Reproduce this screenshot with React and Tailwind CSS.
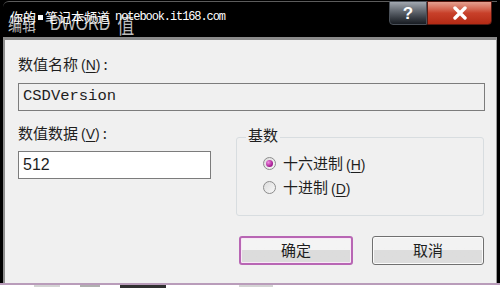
import React from "react";

const cjk = { fontFamily: '"Noto Sans CJK SC", "Liberation Sans", sans-serif' };

function Mn({ ch }) {
  return (
    <span style={{ fontFamily: '"Liberation Sans", sans-serif' }} className="text-[14px]">
      (<span className="underline underline-offset-2">{ch}</span>)
    </span>
  );
}

function Radio({ checked }) {
  return (
    <div className="w-[13px] h-[13px] rounded-full border border-[#8c8c8c] bg-gradient-to-br from-[#dcdcdc] to-[#f8f8f8] flex items-center justify-center">
      {checked && (
        <div className="w-[7px] h-[7px] rounded-full bg-[radial-gradient(circle_at_35%_35%,#f28ee4,#a0148c_70%)]" />
      )}
    </div>
  );
}

export default function App() {
  return (
    <div className="w-[500px] h-[290px] bg-white overflow-hidden relative" style={cjk}>
      <div className="h-[285px] bg-black flex flex-col pl-[3px] pr-[3px] pt-[1px] border-b-2 border-[#b99cba]">
        {/* title bar */}
        <div className="relative h-[36px] border-t border-[#5c5c5c] rounded-tl-[6px] flex items-start justify-between">
          <div className="ml-[5px] mt-[16px] h-[16px] flex items-end text-[#bdbdbd] leading-[16px] origin-bottom scale-y-[1.3]">
            <span className="text-[14px]">编辑</span>
            <span className="ml-[14px] text-[15.5px] font-light" style={{ fontFamily: '"Liberation Sans", sans-serif' }}>DWORD</span>
            <span className="ml-[7px] text-[17px]">值</span>
          </div>
          <div className="flex mr-[5px] -mt-[1px]">
            <div className="w-[38px] h-[24px] rounded-bl-[4px] border border-[#4a5058] bg-gradient-to-b from-[#a2a8b0] via-[#565c64] to-[#181c22] flex items-center justify-center">
              <span className="text-white font-bold text-[17px] leading-none" style={{ fontFamily: '"Liberation Sans", sans-serif' }}>?</span>
            </div>
            <div className="w-[65px] h-[24px] rounded-br-[4px] border border-[#5a1a12] bg-gradient-to-b from-[#e4a090] via-[#c8402a] to-[#b42a14] flex items-center justify-center">
              <svg width="16" height="14" viewBox="0 0 16 14">
                <path d="M3 2 L13 12 M13 2 L3 12" stroke="#ffffff" strokeWidth="3.4" strokeLinecap="round" />
              </svg>
            </div>
          </div>
          {/* watermark overlay */}
          <div className="absolute left-[7px] top-[7px] flex items-center text-white text-[13px] leading-[16px]">
            <span>你的</span>
            <span className="inline-block w-[5px] h-[5px] bg-white mx-[2px]" />
            <span>笔记本频道</span>
            <span className="ml-[5px] text-[12px] tracking-[-1.1px]" style={{ fontFamily: '"Liberation Mono", monospace' }}>notebook.it168.com</span>
          </div>
        </div>

        {/* client */}
        <div className="flex-1 bg-[#f0f0f0] border-t-[3px] border-[#8a8a8a] border-l-2 border-l-[#8e8e8e] border-r border-r-[#9a9a9a] pl-[13px] pr-[11px] pt-[14px] text-[#1e1e1e]">
          <div className="h-[20px] text-[15px] leading-[20px] flex items-center">
            数值名称 <span className="ml-[3px]"><Mn ch="N" /></span>
            <span className="ml-[3px]">:</span>
          </div>
          <div className="mt-[9px] h-[28px] border border-[#7c7c7c] bg-[#f0f0f0] flex items-center pl-[4px]">
            <span className="text-[15.5px]" style={{ fontFamily: '"Liberation Mono", monospace' }}>CSDVersion</span>
          </div>

          <div className="mt-[12px] flex">
            <div className="w-[193px] flex flex-col">
              <div className="h-[20px] text-[15px] leading-[20px] flex items-center">
                数值数据 <span className="ml-[3px]"><Mn ch="V" /></span>
                <span className="ml-[3px]">:</span>
              </div>
              <div className="mt-[8px] h-[28px] border border-[#7c7c7c] bg-white flex items-center pl-[4px]">
                <span className="text-[16px]" style={{ fontFamily: '"Liberation Sans", sans-serif' }}>512</span>
              </div>
            </div>
            <div className="ml-[25px] mt-[14px] relative w-[248px] h-[79px] border border-[#d8dde0] rounded-[3px] flex flex-col pl-[26px] pt-[18px] gap-[10px]">
              <div className="absolute -top-[13px] left-[9px] px-[2px] bg-[#f0f0f0] text-[15px] leading-[20px]">基数</div>
              <div className="flex items-center h-[14px]">
                <Radio checked />
                <span className="ml-[7px] text-[15px] leading-[20px]">十六进制</span>
                <span className="ml-[3px]"><Mn ch="H" /></span>
              </div>
              <div className="flex items-center h-[14px]">
                <Radio />
                <span className="ml-[7px] text-[15px] leading-[20px]">十进制</span>
                <span className="ml-[3px]"><Mn ch="D" /></span>
              </div>
            </div>
          </div>

          <div className="mt-[20px] flex pl-[221px]">
            <div className="w-[114px] h-[29px] rounded-[3px] border-2 border-[#b866b4] bg-gradient-to-b from-[#f4f4f4] from-50% to-[#dcdcdc] to-50% flex items-center justify-center shadow-[inset_0_0_0_1px_#f8e8f6]">
              <span className="text-[15px]">确定</span>
            </div>
            <div className="ml-[19px] w-[112px] h-[29px] rounded-[3px] border border-[#707070] bg-gradient-to-b from-[#f2f2f2] from-50% to-[#dddddd] to-50% flex items-center justify-center shadow-[inset_0_0_0_1px_#fbfbfb]">
              <span className="text-[15px]">取消</span>
            </div>
          </div>
        </div>
      </div>
      {/* fragments of the page below */}
      <div className="flex items-start h-[5px] pl-[34px] gap-[20px]">
        <div className="w-[26px] h-[2px] bg-[#d4d4d4]" />
        <div className="w-[20px] h-[2px] bg-[#b0b0b0]" />
        <div className="w-[46px] h-[3px] bg-[#303030]" />
        <div className="ml-[53px] w-[34px] h-[2px] bg-[#d4d4d4]" />
      </div>
    </div>
  );
}
